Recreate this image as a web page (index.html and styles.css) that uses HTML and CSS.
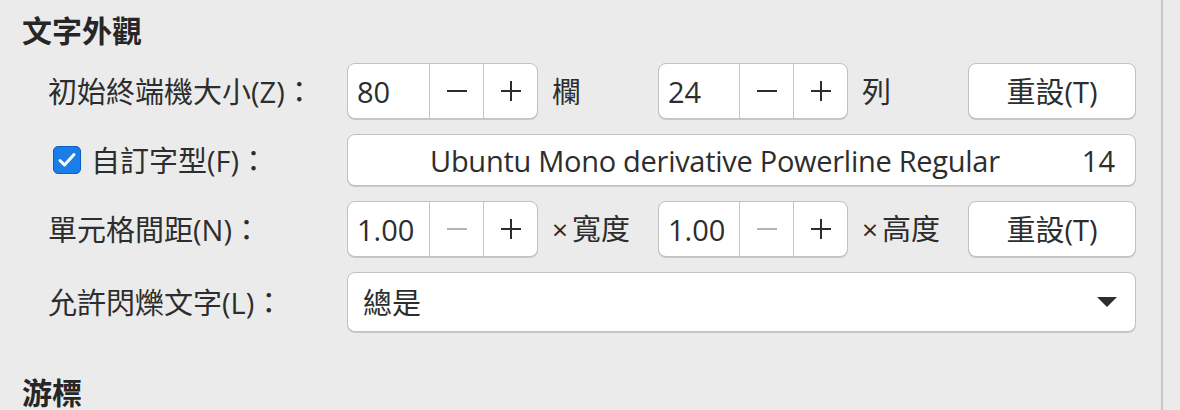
FILE: index.html
```html
<!DOCTYPE html>
<html lang="zh-TW">
<head>
  <meta charset="UTF-8">
  <meta name="viewport" content="width=device-width, initial-scale=1.0">
  <title>設定檔偏好設定</title>
  <link rel="stylesheet" href="styles.css">
</head>
<body>

<div class="prefs">
  <h2 class="section-title">文字外觀</h2>

  <div class="form-grid">
    <label class="field-label">初始終端機大小(Z)：</label>
    <div class="spin">
      <span class="spin-value">80</span>
      <span class="spin-btn">
        <svg width="22" height="22" viewBox="0 0 22 22"><path d="M1 11h20" /></svg>
      </span>
      <span class="spin-btn">
        <svg width="22" height="22" viewBox="0 0 22 22"><path d="M1 11h20M11 1v20" /></svg>
      </span>
    </div>
    <span class="unit">欄</span>
    <div class="spin">
      <span class="spin-value">24</span>
      <span class="spin-btn">
        <svg width="22" height="22" viewBox="0 0 22 22"><path d="M1 11h20" /></svg>
      </span>
      <span class="spin-btn">
        <svg width="22" height="22" viewBox="0 0 22 22"><path d="M1 11h20M11 1v20" /></svg>
      </span>
    </div>
    <span class="unit">列</span>
    <button type="button" class="btn">重設(T)</button>

    <label class="field-label check-label">
      <span class="checkbox">
        <svg width="22" height="22" viewBox="0 0 22 22"><path d="M4 11.5l4.5 4.5 9.5-10.5" /></svg>
      </span>
      自訂字型(F)：
    </label>
    <button type="button" class="font-btn">
      <span class="font-name">Ubuntu Mono derivative Powerline Regular</span>
      <span class="font-size">14</span>
    </button>

    <label class="field-label">單元格間距(N)：</label>
    <div class="spin">
      <span class="spin-value">1.00</span>
      <span class="spin-btn disabled">
        <svg width="22" height="22" viewBox="0 0 22 22"><path d="M1 11h20" /></svg>
      </span>
      <span class="spin-btn">
        <svg width="22" height="22" viewBox="0 0 22 22"><path d="M1 11h20M11 1v20" /></svg>
      </span>
    </div>
    <span class="unit"><span class="times">×</span>寬度</span>
    <div class="spin">
      <span class="spin-value">1.00</span>
      <span class="spin-btn disabled">
        <svg width="22" height="22" viewBox="0 0 22 22"><path d="M1 11h20" /></svg>
      </span>
      <span class="spin-btn">
        <svg width="22" height="22" viewBox="0 0 22 22"><path d="M1 11h20M11 1v20" /></svg>
      </span>
    </div>
    <span class="unit"><span class="times">×</span>高度</span>
    <button type="button" class="btn">重設(T)</button>

    <label class="field-label">允許閃爍文字(L)：</label>
    <div class="combo">
      <span>總是</span>
      <svg width="20" height="10" viewBox="0 0 20 10"><path d="M0 0h20L10 10z" /></svg>
    </div>
  </div>

  <h2 class="section-title next">游標</h2>
</div>

</body>
</html>
```

FILE: styles.css
```css
body {
    margin: 0;
    background-color: #ebebeb;
    color: #2d2d2d;
    font-family: "Open Sans", "Noto Sans CJK TC", sans-serif;
    font-size: 29px;
    line-height: 35px;
    overflow: hidden;
}

.prefs {
    box-sizing: border-box;
    width: 1163px;
    height: 100vh;
    padding: 13px 0 0 22px;
    border-right: 2px solid #c6c6c6;
}

.section-title {
    margin: 0;
    color: #262626;
    font-size: 30px;
    font-weight: 700;
    line-height: 35px;
}

.section-title.next {
    margin-top: 43px;
}

.form-grid {
    display: grid;
    grid-template-columns: 285px 191px 92px 190px 92px 168px;
    column-gap: 14px;
    row-gap: 15px;
    align-items: center;
    margin: 15px 0 0 26px;
}

.field-label {
    white-space: nowrap;
}

.check-label {
    display: flex;
    align-items: center;
    gap: 10px;
    padding-left: 5px;
}

.checkbox {
    box-sizing: border-box;
    display: flex;
    justify-content: center;
    align-items: center;
    width: 28px;
    height: 28px;
    border: 1px solid #0b5fc2;
    border-radius: 5px;
    background-color: #1a7ee8;
}

.checkbox path {
    fill: none;
    stroke: #fff;
    stroke-width: 3;
    stroke-linecap: round;
    stroke-linejoin: round;
}

.spin,
.btn,
.font-btn,
.combo {
    box-sizing: border-box;
    border: 1px solid #c2c2c2;
    border-radius: 8px;
    background-color: #fff;
    box-shadow: 0 1px 0 #c8c8c8;
    color: inherit;
    font: inherit;
}

.spin {
    display: grid;
    grid-template-columns: 1fr 54px 54px;
    height: 56px;
    overflow: hidden;
}

.spin-value {
    align-self: center;
    padding-left: 9px;
}

.spin-btn {
    display: flex;
    justify-content: center;
    align-items: center;
    border-left: 1px solid #c6c6c6;
}

.spin-btn path {
    fill: none;
    stroke: #2d2d2d;
    stroke-width: 2;
}

.spin-btn.disabled path {
    stroke: #b4b4b4;
}

.unit {
    white-space: nowrap;
}

.times {
    font-size: 28px;
    margin-right: 4px;
}

.btn {
    height: 56px;
    padding: 0;
    text-align: center;
}

.font-btn {
    grid-column: 2 / 7;
    display: flex;
    align-items: center;
    height: 52px;
    padding: 0 20px 0 0;
}

.font-name {
    flex: 1;
    text-align: center;
    letter-spacing: -0.28px;
}

.combo {
    grid-column: 2 / 7;
    display: flex;
    justify-content: space-between;
    align-items: center;
    height: 60px;
    padding: 0 18px 0 15px;
}

.combo path {
    fill: #2d2d2d;
}
```
